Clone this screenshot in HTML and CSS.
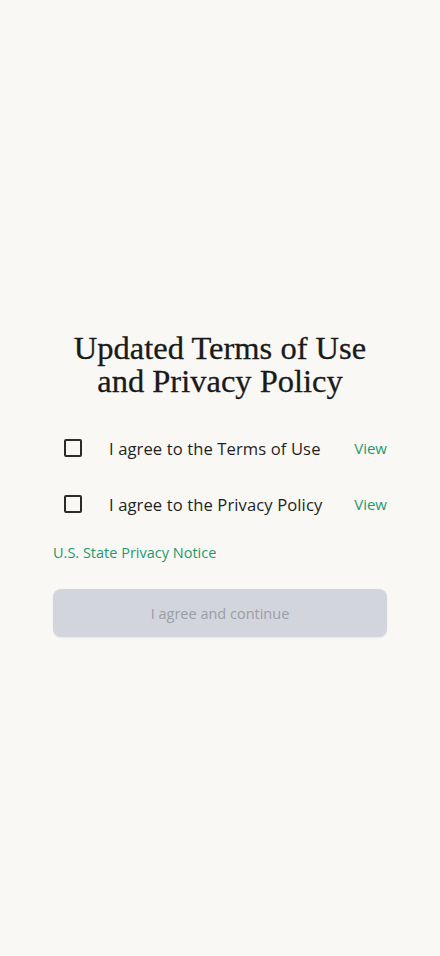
FILE: index.html
```html
<!DOCTYPE html>
<html>
<head>
<meta charset="utf-8">
<link rel="stylesheet" href="styles.css">
</head>
<body>
<main class="page">
  <h1 class="title">Updated Terms of Use<br>and Privacy Policy</h1>
  <div class="rows">
    <div class="row">
      <span class="box"></span>
      <span class="label">I agree to the Terms of Use</span>
      <a class="view">View</a>
    </div>
    <div class="row">
      <span class="box"></span>
      <span class="label">I agree to the Privacy Policy</span>
      <a class="view">View</a>
    </div>
  </div>
  <a class="notice">U.S. State Privacy Notice</a>
  <button class="btn">I agree and continue</button>
</main>
</body>
</html>
```
FILE: styles.css
```css
html, body {
  margin: 0;
  padding: 0;
  background: #f9f8f5;
}
.page {
  box-sizing: border-box;
  width: 440px;
  height: 956px;
  padding: 332px 53px 0 53px;
  display: flex;
  flex-direction: column;
  font-family: "Open Sans", "Noto Sans", sans-serif;
}
.title {
  margin: 0;
  font-family: "Liberation Serif", serif;
  font-weight: 400;
  font-size: 32.5px;
  line-height: 33px;
  text-align: center;
  color: #1a1a1a;
  -webkit-text-stroke: 0.3px #1a1a1a;
}
.rows {
  margin-top: 32px;
  display: flex;
  flex-direction: column;
  gap: 20px;
}
.row {
  display: flex;
  align-items: center;
  height: 36px;
  padding-left: 11px;
}
.box {
  box-sizing: border-box;
  width: 18px;
  height: 18px;
  border: 2px solid #2a2a2a;
  border-radius: 2px;
  flex: none;
}
.label {
  margin-left: 27px;
  font-size: 16.6px;
  color: #1f1f1f;
  flex: 1;
  letter-spacing: 0.1px;
}
.view {
  font-size: 15px;
  color: #1f9a6e;
}
.notice {
  margin-top: 21px;
  font-size: 14.5px;
  color: #1f9a6e;
  line-height: 20px;
}
.btn {
  margin-top: 26px;
  height: 48px;
  border: none;
  border-radius: 8px;
  background: #d2d5dc;
  color: #9a9ea6;
  font-family: "Open Sans", "Noto Sans", sans-serif;
  font-size: 14.5px;
  box-shadow: 0 1px 2px rgba(0,0,0,0.08);
}
```
